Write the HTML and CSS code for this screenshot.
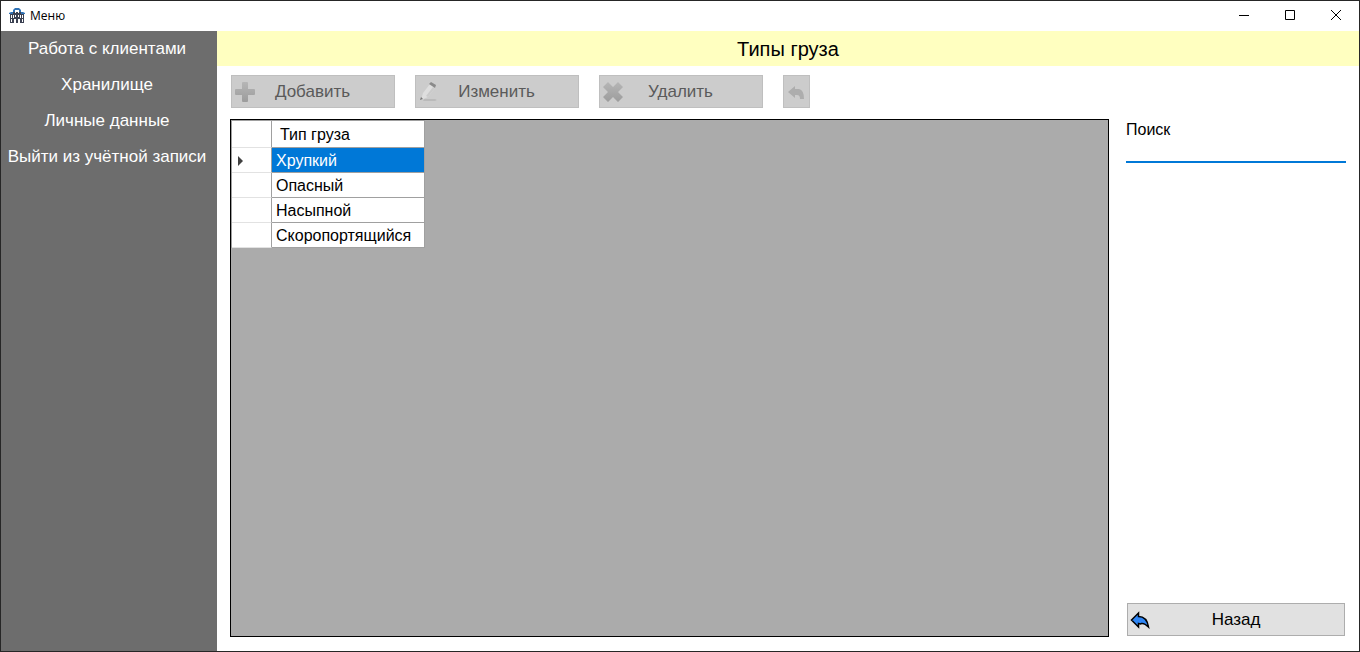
FILE: index.html
```html
<!DOCTYPE html>
<html lang="ru">
<head>
<meta charset="utf-8">
<title>Меню</title>
<link rel="stylesheet" href="styles.css">
</head>
<body>
<div class="window">
  <header class="titlebar">
    <svg class="app-icon" width="16" height="16" viewBox="0 0 16 16" aria-hidden="true">
      <path fill="#3b4152" d="M1 6h14v9H1zM4 4h8v3H4z"/>
      <path fill="#2f72b5" d="M4 4V2l2-2h4l2 2v2h-2V2H6v2zM0 6V5l2-1h2v2zM12 6V4h2l2 1v1z"/>
      <path fill="#fff" d="M6 3h1v2H6zM9 3h1v2H9zM2 7h1v3H2zM4 7h1v3H4zM6 7h1v2H6zM9 7h1v2H9zM11 7h1v3h-1zM13 7h1v3h-1zM2 11h1v3H2zM5 11h2v4H5zM9 11h2v4H9zM13 11h1v3h-1z"/>
    </svg>
    <span class="app-title">Меню</span>
    <div class="window-buttons">
      <button class="window-button" type="button" aria-label="Свернуть"><svg width="12" height="12" viewBox="0 0 12 12"><path d="M1 6.500h10" stroke="#000"/></svg></button>
      <button class="window-button" type="button" aria-label="Развернуть"><svg width="12" height="12" viewBox="0 0 12 12"><path d="M1.500 1.500h9v9h-9z" fill="none" stroke="#000"/></svg></button>
      <button class="window-button" type="button" aria-label="Закрыть"><svg width="12" height="12" viewBox="0 0 12 12"><path d="M1 1l10 10M11 1L1 11" stroke="#000"/></svg></button>
    </div>
  </header>
  <div class="body">
    <nav class="sidebar">
      <a class="nav-link" href="#clients">Работа с клиентами</a>
      <a class="nav-link" href="#storage">Хранилище</a>
      <a class="nav-link" href="#profile">Личные данные</a>
      <a class="nav-link" href="#logout">Выйти из учётной записи</a>
    </nav>
    <main class="main">
      <h1 class="heading">Типы груза</h1>
      <div class="toolbar">
        <button class="button tool" type="button" disabled>
          <svg class="icon" width="20" height="20" viewBox="0 0 20 20"><defs><linearGradient id="metal" x2="0" y2="1"><stop stop-color="#b6b6b6"/><stop offset="1" stop-color="#9c9c9c"/></linearGradient></defs><path fill="url(#metal)" d="M8 0h4q1 0 1 1v6h6q1 0 1 1v4q0 1-1 1h-6v6q0 1-1 1H8q-1 0-1-1v-6H1q-1 0-1-1V8q0-1 1-1h6V1q0-1 1-1z"/></svg>
          <span class="label">Добавить</span>
        </button>
        <button class="button tool" type="button" disabled>
          <svg class="icon" width="20" height="20" viewBox="0 0 20 20"><path fill="#bababa" d="M5 17h11l2 1-2 1H4z"/><path fill="#dedede" d="M2 18l2-7 7-9 5 4-7 9z"/><path fill="#cacaca" d="M7 14l7-9 2 1-7 9z"/><path fill="#8a8a8a" d="M10 2l2-2 5 3-1 3z"/><path fill="#777" d="M1 18l1-3 2 2z"/></svg>
          <span class="label">Изменить</span>
        </button>
        <button class="button tool" type="button" disabled>
          <svg class="icon" width="20" height="20" viewBox="0 0 20 20"><path fill="url(#metal)" d="M5 0l5 5 5-5 5 5-5 5 5 5-5 5-5-5-5 5-5-5 5-5-5-5z"/></svg>
          <span class="label">Удалить</span>
        </button>
        <button class="button undo" type="button" aria-label="Отменить" disabled>
          <svg width="17" height="14" viewBox="0 0 17 14"><path fill="#adadad" d="M7 0v3h4q5 1 5 10h-4q0-4-3-4H7v3L0 6z"/></svg>
        </button>
      </div>
      <div class="content">
        <div class="grid">
          <table class="table">
            <thead><tr><th class="marker"></th><th class="column">Тип груза</th></tr></thead>
            <tbody>
              <tr><th class="marker"><svg class="arrow" width="5" height="10" viewBox="0 0 5 10"><path fill="#404040" d="M0 0l5 5-5 5z"/></svg></th><td class="cell selected">Хрупкий</td></tr>
              <tr><th class="marker"></th><td class="cell">Опасный</td></tr>
              <tr><th class="marker"></th><td class="cell">Насыпной</td></tr>
              <tr><th class="marker"></th><td class="cell">Скоропортящийся</td></tr>
            </tbody>
          </table>
        </div>
        <aside class="side">
          <label class="search-label" for="search">Поиск</label>
          <input class="search" id="search" type="text">
          <button class="button back" type="button">
            <svg class="icon" width="20" height="18" viewBox="0 0 20 18"><path fill="#2f86f5" stroke="#000" stroke-width="1.500" d="M1.500 9L8.500 2v3.500c6 0 9 4 10 10.500-3-3-5-4-7-3.500l-1 0.500-2-0.500V16z"/></svg>
            <span class="label">Назад</span>
          </button>
        </aside>
      </div>
    </main>
  </div>
</div>
</body>
</html>
```
FILE: styles.css
```css
* {
  box-sizing: border-box;
}

body {
  margin: 0;
  font: 16px/20px "Liberation Sans", Arial, sans-serif;
  color: #000;
}

.window {
  display: flex;
  flex-direction: column;
  height: 100vh;
  border: 1px solid #262626;
  background: #fff;
}

.titlebar {
  display: flex;
  align-items: center;
  height: 30px;
  flex: none;
  padding-left: 8px;
  gap: 5px;
}

.app-title {
  font: 12px/16px "Open Sans", "Noto Sans", sans-serif;
}

.window-buttons {
  display: flex;
  margin-left: auto;
}

.window-button {
  display: flex;
  align-items: center;
  justify-content: center;
  width: 46px;
  height: 30px;
  padding: 0 0 2px;
  border: 0;
  background: none;
}

.body {
  display: flex;
  flex: 1;
  min-height: 0;
}

.sidebar {
  display: flex;
  flex-direction: column;
  width: 216px;
  flex: none;
  background: #6d6d6d;
}

.nav-link {
  padding: 8px 4px 8px 0;
  color: #fff;
  font-size: 17px;
  text-align: center;
  text-decoration: none;
  white-space: nowrap;
}

.main {
  display: flex;
  flex-direction: column;
  flex: 1;
  min-width: 0;
}

.heading {
  margin: 0;
  padding: 6px 0 5px;
  background: #ffffc0;
  font-size: 20px;
  line-height: 24px;
  font-weight: normal;
  text-align: center;
}

.toolbar {
  display: flex;
  gap: 20px;
  padding: 9px 14px 11px;
}

.button {
  display: flex;
  align-items: center;
  height: 33px;
  border: 1px solid #adadad;
  background: #e1e1e1;
  color: #000;
  font: inherit;
  font-size: 17px;
}

.button:disabled {
  border-color: #bfbfbf;
  background: #ccc;
  color: #5a5a5a;
}

.tool {
  width: 164px;
  padding: 0 24px 0 3px;
}

.icon {
  flex: none;
}

.label {
  flex: 1;
  text-align: center;
}

.undo {
  width: 27px;
  justify-content: center;
  padding: 2px 0 0;
}

.content {
  display: flex;
  flex: 1;
  gap: 17px;
  min-height: 0;
  padding: 0 13px 14px;
}

.grid {
  flex: 1;
  border: 1px solid #000;
  background: #ababab;
}

.table {
  border-spacing: 0;
  border-top: 1px solid #a0a0a0;
  border-left: 1px solid #a0a0a0;
}

.marker,
.column,
.cell {
  height: 25px;
  padding: 2px 4px 0;
  border-right: 1px solid #a0a0a0;
  border-bottom: 1px solid #a0a0a0;
  background: #fff;
  font-weight: normal;
  text-align: left;
}

.marker {
  width: 40px;
  padding: 2px 6px 0;
  border-bottom-color: #e2e2e2;
}

.column {
  width: 153px;
  height: 27px;
  padding: 2px 8px 0;
}

.selected {
  background: #0078d7;
  color: #fff;
}

.arrow {
  display: block;
}

.side {
  display: flex;
  flex-direction: column;
  width: 220px;
  flex: none;
}

.search-label {
  padding-top: 1px;
}

.search {
  width: 100%;
  height: 23px;
  padding: 0;
  border: 0;
  border-bottom: 2px solid #0078d7;
  outline: 0;
  background: none;
  font: inherit;
}

.back {
  margin: auto 1px 1px;
  padding: 0 22px 0 2px;
}
```
